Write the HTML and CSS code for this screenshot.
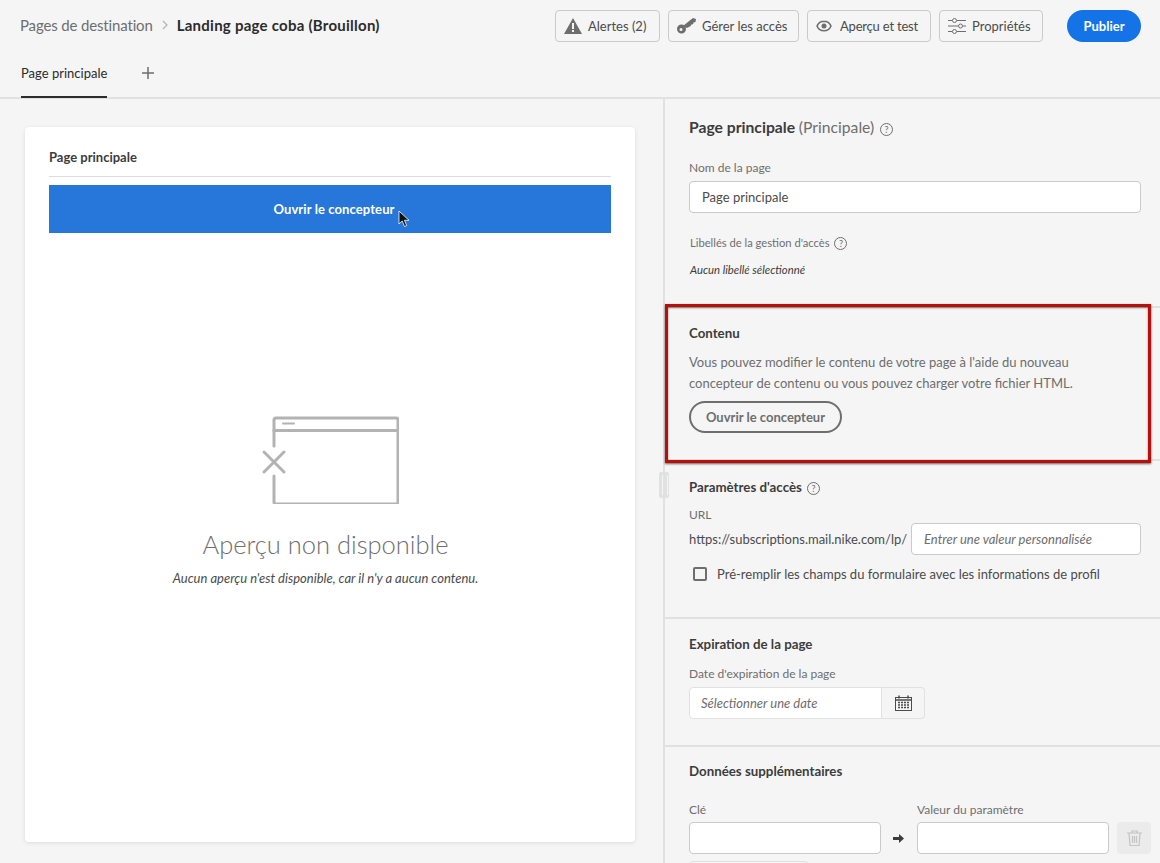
FILE: index.html
```html
<!DOCTYPE html>
<html lang="fr">
<head>
    <meta charset="UTF-8">
    <title>Landing page coba</title>
    <link rel="stylesheet" href="styles.css">
</head>
<body>
<div class="app">
    <header class="topbar">
        <div class="topbar-row">
            <div class="crumbs">
                <span class="crumb">Pages de destination</span>
                <svg class="crumb-sep" width="6" height="10" viewBox="0 0 6 10"><path d="M1 1l4 4-4 4" fill="none" stroke="#b5b5b5" stroke-width="1.3"/></svg>
                <span class="crumb-current">Landing page coba (Brouillon)</span>
            </div>
            <div class="actions">
                <button class="tool-btn btn-alerts">
                    <svg width="18" height="16" viewBox="0 0 18 16"><path d="M9 0l9 16H0z" fill="#6e6e6e"/><rect x="8" y="5" width="2" height="6" fill="#f5f5f5"/><rect x="8" y="12" width="2" height="2" fill="#f5f5f5"/></svg>
                    Alertes (2)
                </button>
                <button class="tool-btn btn-access">
                    <svg width="19" height="16" viewBox="0 0 19 16"><path fill-rule="evenodd" d="M4.500 6.500a4.500 4.500 0 1 1 0 9 4.500 4.500 0 0 1 0-9zm-.5 3.500a1.500 1.500 0 1 0 0 3 1.500 1.500 0 0 0 0-3z" fill="#6e6e6e"/><path d="M6 8l8-6.500L16 0l3 1-.5 3-2 .6-.4 1.600-1.800.2-.6 1.600-3.700 2z" fill="#6e6e6e"/></svg>
                    Gérer les accès
                </button>
                <button class="tool-btn btn-preview">
                    <svg width="16" height="12" viewBox="0 0 16 12"><path d="M8 1.200C4.800 1.200 2.200 3.200 1 6c1.200 2.800 3.800 4.800 7 4.800s5.800-2 7-4.800c-1.200-2.800-3.800-4.800-7-4.800z" fill="none" stroke="#6e6e6e" stroke-width="1.600"/><circle cx="8" cy="6" r="2.500" fill="#6e6e6e"/></svg>
                    Aperçu et test
                </button>
                <button class="tool-btn btn-props">
                    <svg width="18" height="16" viewBox="0 0 18 16" fill="none" stroke="#6e6e6e" stroke-width="1"><path d="M0 2.500h4M9 2.500h9M0 8h10M15 8h3M0 13.500h4M9 13.500h9"/><circle cx="6.500" cy="2.500" r="2"/><circle cx="12.500" cy="8" r="2"/><circle cx="6.500" cy="13.500" r="2"/></svg>
                    Propriétés
                </button>
                <button class="publish-btn">Publier</button>
            </div>
        </div>
        <div class="tabs">
            <div class="tab">Page principale</div>
            <svg class="tab-add" width="12" height="12" viewBox="0 0 12 12"><path d="M6 0v12M0 6h12" stroke="#6e6e6e" stroke-width="1.500"/></svg>
        </div>
    </header>

    <div class="workspace">
        <main class="canvas">
            <section class="preview-card">
                <h3 class="preview-title">Page principale</h3>
                <div class="open-banner">Ouvrir le concepteur</div>
                <div class="empty">
                    <svg class="empty-icon" width="138" height="88" viewBox="0 0 138 88" fill="none" stroke="#b3b3b3" stroke-width="3" stroke-linecap="round" stroke-linejoin="round">
                        <path d="M13 30V4a2 2 0 0 1 2-2h120a2 2 0 0 1 2 2v82a2 2 0 0 1-2 2H15a2 2 0 0 1-2-2V60"/>
                        <path d="M13 14.500h124"/>
                        <path d="M22 7.500h11" stroke-width="2"/>
                        <path d="M3 36l20 20M23 36L3 56"/>
                    </svg>
                    <h2 class="empty-title">Aperçu non disponible</h2>
                    <p class="empty-text">Aucun aperçu n'est disponible, car il n'y a aucun contenu.</p>
                </div>
            </section>
            <svg class="cursor" width="13" height="18" viewBox="0 0 13 18"><path d="M1 1v13l3.200-3 2.300 5.500 2.200-1-2.300-5.200H11z" fill="#111" stroke="#fff" stroke-width="0.800"/></svg>
        </main>

        <aside class="panel">
            <div class="grip"></div>

            <section class="block block-page">
                <h3 class="panel-heading">Page principale <span class="muted-heading">(Principale)</span> <span class="help">?</span></h3>
                <label class="field-label">Nom de la page</label>
                <input class="text-input" type="text" value="Page principale">
                <div class="access-label">Libellés de la gestion d'accès <span class="help">?</span></div>
                <div class="none-label">Aucun libellé sélectionné</div>
            </section>

            <section class="block block-content">
                <h4 class="sub-heading">Contenu</h4>
                <p class="body-text">Vous pouvez modifier le contenu de votre page à l'aide du nouveau<br>concepteur de contenu ou vous pouvez charger votre fichier HTML.</p>
                <button class="outline-btn">Ouvrir le concepteur</button>
            </section>

            <section class="block block-access">
                <h4 class="sub-heading">Paramètres d'accès <span class="help">?</span></h4>
                <label class="field-label">URL</label>
                <div class="url-row">
                    <span class="url-base">https://subscriptions.mail.nike.com/lp/</span>
                    <input class="text-input url-input" type="text" placeholder="Entrer une valeur personnalisée">
                </div>
                <label class="check-row"><span class="checkbox"></span>Pré-remplir les champs du formulaire avec les informations de profil</label>
            </section>

            <section class="block block-expire">
                <h4 class="sub-heading">Expiration de la page</h4>
                <label class="field-label">Date d'expiration de la page</label>
                <div class="date-field">
                    <input class="date-input" type="text" placeholder="Sélectionner une date">
                    <span class="date-btn">
                        <svg width="17" height="16" viewBox="0 0 17 16"><rect x="0.500" y="2.500" width="16" height="13" fill="none" stroke="#4b4b4b"/><path d="M0.500 5h16" stroke="#4b4b4b" stroke-width="1.500"/><path d="M4 0.500v3M13 0.500v3" stroke="#4b4b4b" stroke-width="1.500"/><path d="M3 7.500h11M3 10h11M3 12.500h11" stroke="#4b4b4b" stroke-width="1.500" stroke-dasharray="2 1"/></svg>
                    </span>
                </div>
            </section>

            <section class="block block-extra">
                <h4 class="sub-heading">Données supplémentaires</h4>
                <div class="kv-row">
                    <div class="kv-col">
                        <label class="field-label">Clé</label>
                        <input class="text-input" type="text">
                    </div>
                    <svg class="kv-arrow" width="11" height="9" viewBox="0 0 11 9"><path d="M0 3h6V0l5 4.500L6 9V6H0z" fill="#3c3c3c"/></svg>
                    <div class="kv-col">
                        <label class="field-label">Valeur du paramètre</label>
                        <input class="text-input" type="text">
                    </div>
                    <span class="trash-btn">
                        <svg width="15" height="16" viewBox="0 0 15 16" fill="none" stroke="#c4c4c4" stroke-width="1.200"><path d="M0 3h15M5 3V1h5v2M2 3l1 12.500h9L13 3M5.500 6v7M7.500 6v7M9.500 6v7"/></svg>
                    </span>
                </div>
                <div class="add-btn"></div>
            </section>

            <div class="highlight"></div>
        </aside>
    </div>
</div>
</body>
</html>
```

FILE: styles.css
```css
* {
    box-sizing: border-box;
}
html, body {
    margin: 0;
    height: 100%;
    overflow: hidden;
}
body {
    font-family: Lato, "Open Sans", sans-serif;
    font-size: 13px;
    color: #4b4b4b;
    background-color: #f5f5f5;
}
.app {
    height: 863px;
    display: flex;
    flex-direction: column;
}

/* top bar */
.topbar {
    height: 99px;
    flex: none;
    border-bottom: 2px solid #e1e1e1;
    padding: 0 19px 0 20px;
}
.topbar-row {
    height: 50px;
    padding-top: 1px;
    display: flex;
    justify-content: space-between;
    align-items: center;
}
.crumbs {
    display: flex;
    align-items: center;
    font-size: 15px;
    margin-top: -1px;
}
.crumb {
    color: #6e6e6e;
    letter-spacing: -0.15px;
}
.crumb-sep {
    margin: 0 9px 0 9px;
}
.crumb-current {
    font-weight: 700;
    color: #2c2c2c;
    letter-spacing: 0.25px;
}
.actions {
    display: flex;
    gap: 8px;
}
.tool-btn {
    height: 32px;
    padding: 0 0 0 8px;
    display: flex;
    align-items: center;
    gap: 6px;
    font-family: inherit;
    font-size: 13px;
    color: #4b4b4b;
    background: #f5f5f5;
    border: 1px solid #cacaca;
    border-radius: 4px;
}
.btn-alerts {
    width: 105px;
}
.btn-access {
    width: 131px;
}
.btn-preview {
    width: 124px;
    gap: 8px;
    letter-spacing: -0.2px;
}
.btn-props {
    width: 104px;
}
.publish-btn {
    height: 32px;
    width: 74px;
    margin-left: 16px;
    font-family: inherit;
    font-size: 13px;
    font-weight: 700;
    color: #fff;
    background: #1473e6;
    border: none;
    border-radius: 16px;
}
.tabs {
    height: 47px;
    display: flex;
    align-items: center;
    gap: 35px;
    padding-left: 1px;
}
.tab {
    height: 47px;
    margin-bottom: -1px;
    padding-top: 14px;
    font-size: 13px;
    color: #2c2c2c;
    border-bottom: 2px solid #2c2c2c;
}
.tab-add {
    margin-top: -1px;
}

/* left side */
.workspace {
    flex: 1;
    display: flex;
    min-height: 0;
}
.canvas {
    width: 663px;
    flex: none;
    padding: 28px 28px 0 25px;
    position: relative;
}
.preview-card {
    height: 715px;
    padding: 22px 24px 0;
    background: #fff;
    border-radius: 4px;
    box-shadow: 0 1px 4px rgba(0, 0, 0, 0.1);
}
.preview-title {
    margin: 0;
    height: 28px;
    font-size: 13px;
    font-weight: 700;
    color: #3c3c3c;
    border-bottom: 1px solid #dcdcdc;
}
.open-banner {
    margin-top: 8px;
    padding-left: 8px;
    height: 48px;
    line-height: 48px;
    text-align: center;
    font-size: 13px;
    font-weight: 700;
    letter-spacing: 0.1px;
    color: #fff;
    background: #2677d9;
}
.empty {
    margin-top: 183px;
    display: flex;
    flex-direction: column;
    align-items: center;
}
.empty-title {
    margin: 22px 9px 0 0;
    font-size: 25.500px;
    line-height: 36px;
    font-weight: 300;
    color: #6e6e6e;
}
.empty-text {
    margin: 8px 9px 0 0;
    font-size: 13px;
    font-style: italic;
    color: #4b4b4b;
}
.cursor {
    position: absolute;
    left: 398px;
    top: 111px;
}

/* right panel */
.panel {
    flex: 1;
    min-width: 0;
    position: relative;
    border-left: 2px solid #e1e1e1;
}
.block {
    padding: 0 19px 0 24px;
    border-bottom: 2px solid #e1e1e1;
}
.block-page {
    height: 209px;
    padding-top: 19px;
}
.block-content {
    height: 153px;
    padding-top: 17px;
}
.block-access {
    height: 158px;
    padding-top: 18px;
}
.block-expire {
    height: 128px;
    padding-top: 17px;
}
.block-extra {
    padding-top: 16px;
    border-bottom: none;
}
.panel-heading {
    margin: 0;
    font-size: 15.700px;
    font-weight: 700;
    color: #3c3c3c;
}
.muted-heading {
    font-weight: 400;
    color: #6e6e6e;
}
.sub-heading {
    margin: 0;
    font-size: 13.300px;
    font-weight: 700;
    color: #3c3c3c;
}
.help {
    display: inline-block;
    width: 13px;
    height: 13px;
    margin-left: 2px;
    border: 1px solid #6e6e6e;
    border-radius: 50%;
    font-size: 9px;
    line-height: 11px;
    font-weight: 400;
    text-align: center;
    vertical-align: 0;
    color: #6e6e6e;
}
.field-label {
    display: block;
    font-size: 12px;
    color: #6e6e6e;
}
.block-page .field-label {
    margin-top: 24px;
    margin-bottom: 6px;
}
.text-input {
    display: block;
    width: 100%;
    height: 32px;
    padding: 0 12px;
    font-family: inherit;
    font-size: 13px;
    color: #4b4b4b;
    background: #fff;
    border: 1px solid #cacaca;
    border-radius: 4px;
}
.text-input::placeholder,
.date-input::placeholder {
    font-style: italic;
    color: #6e6e6e;
    opacity: 1;
}
.access-label {
    margin-top: 23px;
    margin-left: 1px;
    font-size: 11.200px;
    color: #6e6e6e;
}
.none-label {
    margin-top: 13px;
    margin-left: 1px;
    font-size: 11.300px;
    font-style: italic;
    color: #3c3c3c;
}
.body-text {
    margin: 11px 0 0;
    font-size: 13px;
    line-height: 21px;
    color: #6e6e6e;
}
.outline-btn {
    margin-top: 7px;
    height: 32px;
    width: 153px;
    font-family: inherit;
    font-size: 13px;
    font-weight: 700;
    color: #6e6e6e;
    background: transparent;
    border: 2px solid #6e6e6e;
    border-radius: 16px;
}
.block-access .field-label {
    margin-top: 12px;
}
.url-row {
    margin-top: 1px;
    display: flex;
    align-items: center;
    gap: 4px;
}
.url-base {
    font-size: 13px;
    color: #4b4b4b;
    white-space: nowrap;
}
.url-input {
    flex: 1;
    min-width: 0;
}
.check-row {
    margin-top: 11px;
    margin-left: 4px;
    display: flex;
    align-items: center;
    gap: 10px;
    font-size: 13px;
    color: #4b4b4b;
}
.checkbox {
    width: 14px;
    height: 14px;
    border: 2px solid #6e6e6e;
    border-radius: 2px;
}
.block-expire .field-label {
    margin-top: 14px;
    margin-bottom: 6px;
}
.date-field {
    width: 236px;
    height: 32px;
    display: flex;
}
.date-input {
    width: 193px;
    padding: 0 11px;
    font-family: inherit;
    font-size: 13px;
    background: #fff;
    border: 1px solid #e1e1e1;
    border-radius: 4px 0 0 4px;
}
.date-btn {
    flex: 1;
    display: flex;
    align-items: center;
    justify-content: center;
    border: 1px solid #e1e1e1;
    border-left: none;
    border-radius: 0 4px 4px 0;
}
.kv-row {
    margin-top: 23px;
    margin-right: -10px;
    display: flex;
    align-items: flex-end;
}
.kv-col {
    width: 192px;
}
.kv-col .field-label {
    margin-bottom: 5px;
}
.kv-arrow {
    margin: 0 13px 11px 12px;
}
.trash-btn {
    width: 34px;
    height: 32px;
    margin-left: 8px;
    flex: none;
    display: flex;
    align-items: center;
    justify-content: center;
    background: #ebebeb;
    border-radius: 4px;
}
.add-btn {
    margin-top: 7px;
    width: 120px;
    height: 32px;
    border: 1px solid #e1e1e1;
    border-radius: 4px;
}
.grip {
    position: absolute;
    left: -6px;
    top: 373px;
    width: 10px;
    height: 26px;
    background: #e1e1e1;
    border-radius: 2px;
}
.grip::after {
    content: "";
    position: absolute;
    left: 3px;
    top: 3px;
    width: 4px;
    height: 20px;
    border-left: 1px solid #f5f5f5;
    border-right: 1px solid #f5f5f5;
}
/* red annotation drawn on top of the screenshot */
.highlight {
    position: absolute;
    left: 0;
    top: 205px;
    width: 486px;
    height: 159px;
    border: 3px solid #b90e0a;
    box-shadow: 0 1px 2px rgba(0, 0, 0, 0.6), inset 0 1px 2px rgba(0, 0, 0, 0.5);
}
```
